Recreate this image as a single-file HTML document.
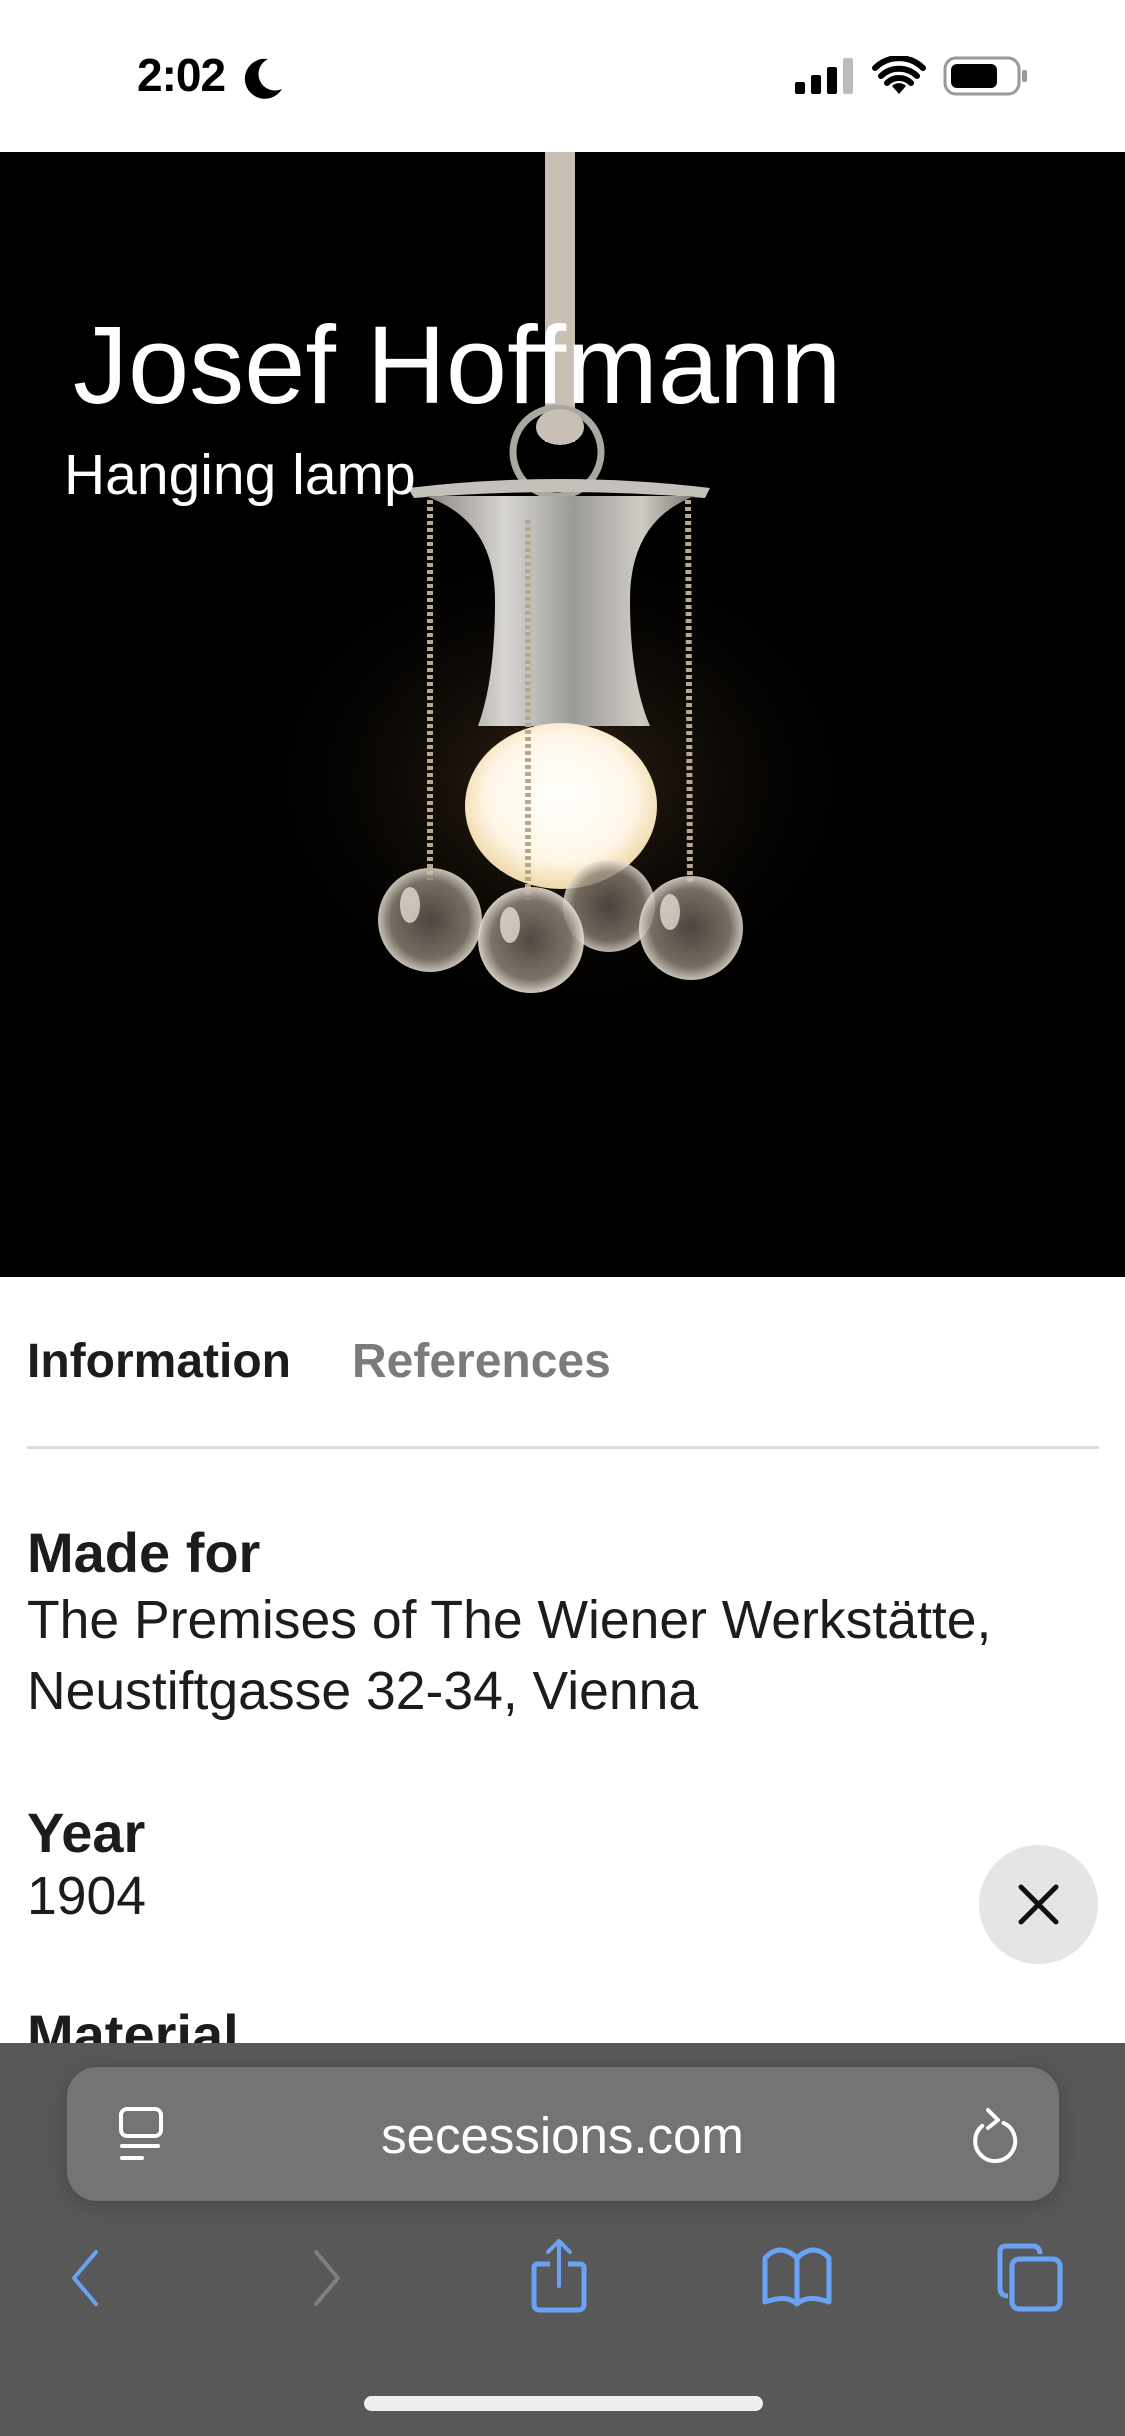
<!DOCTYPE html>
<html><head><meta charset="utf-8"><style>
*{margin:0;padding:0;box-sizing:border-box}
html,body{width:1125px;height:2436px;overflow:hidden;background:#fff;font-family:"Liberation Sans",sans-serif}
.abs{position:absolute}
</style></head><body>
<div class="abs" style="left:0;top:0;width:1125px;height:152px;background:#fff"></div>
<div class="abs" style="left:137px;top:48px;font-size:46px;font-weight:bold;color:#000;letter-spacing:-1px">2:02</div>
<svg class="abs" style="left:242px;top:57px" width="44" height="44" viewBox="0 0 44 44"><path d="M26 2 A20 20 0 1 0 40 32 A16 16 0 0 1 26 2Z" fill="#000"/></svg>
<svg class="abs" style="left:795px;top:58px" width="60" height="36"><rect x="0" y="24" width="10" height="12" rx="2" fill="#000"/><rect x="16" y="17" width="10" height="19" rx="2" fill="#000"/><rect x="32" y="9" width="10" height="27" rx="2" fill="#000"/><rect x="48" y="0" width="10" height="36" rx="2" fill="#bbb"/></svg>
<svg class="abs" style="left:872px;top:56px" width="54" height="40" viewBox="0 0 54 40"><path d="M27 38 L20 30 A10 10 0 0 1 34 30Z" fill="#000"/><path d="M9 20 A26 26 0 0 1 45 20" stroke="#000" stroke-width="6" fill="none" stroke-linecap="round"/><path d="M15 27 A17 17 0 0 1 39 27" stroke="#000" stroke-width="6" fill="none" stroke-linecap="round"/><path d="M3 12 A34 34 0 0 1 51 12" stroke="#000" stroke-width="6" fill="none" stroke-linecap="round"/></svg>
<svg class="abs" style="left:943px;top:56px" width="86" height="40"><rect x="2" y="2" width="74" height="36" rx="11" fill="none" stroke="#999" stroke-width="3"/><rect x="8" y="8" width="46" height="24" rx="6" fill="#000"/><rect x="79" y="14" width="5" height="12" rx="2" fill="#999"/></svg>

<div class="abs" style="left:0;top:152px;width:1125px;height:1125px;background:#000;overflow:hidden">
<svg width="1125" height="1125" viewBox="0 152 1125 1125" style="position:absolute;left:0;top:0">
<defs>
<radialGradient id="glow" cx="0.5" cy="0.5" r="0.5"><stop offset="0" stop-color="#3a2a18" stop-opacity="0.9"/><stop offset="1" stop-color="#000" stop-opacity="0"/></radialGradient>
<radialGradient id="bulb" cx="0.5" cy="0.45" r="0.55"><stop offset="0" stop-color="#fff"/><stop offset="0.7" stop-color="#fff6e6"/><stop offset="1" stop-color="#f0d8a8"/></radialGradient>
<linearGradient id="shade" x1="0" x2="1"><stop offset="0" stop-color="#8a8680"/><stop offset="0.3" stop-color="#d8d6d2"/><stop offset="0.55" stop-color="#9c9a96"/><stop offset="0.8" stop-color="#cfccc6"/><stop offset="1" stop-color="#7a7670"/></linearGradient>
<radialGradient id="ball" cx="0.5" cy="0.5" r="0.5"><stop offset="0" stop-color="#5a5048"/><stop offset="0.75" stop-color="#8a8074"/><stop offset="1" stop-color="#e8e0d4"/></radialGradient>
</defs>
<ellipse cx="560" cy="780" rx="330" ry="260" fill="url(#glow)"/>
<rect x="545" y="152" width="30" height="290" fill="#c8c0b2"/>
<circle cx="557" cy="452" r="44" fill="none" stroke="#aaa6a0" stroke-width="7"/>
<ellipse cx="560" cy="427" rx="24" ry="18" fill="#c8c0b4"/>
<path d="M408 488 Q560 470 710 488 L705 498 Q560 486 414 498Z" fill="#c4c0ba"/>
<path d="M425 496 Q495 520 495 600 Q495 680 478 726 L650 726 Q630 680 630 600 Q630 520 695 496Z" fill="url(#shade)"/>
<ellipse cx="561" cy="806" rx="96" ry="83" fill="url(#bulb)"/>
<g stroke="#b8a88e" stroke-width="6" fill="none" stroke-dasharray="4 3">
<path d="M430 500 L430 880"/><path d="M528 520 L528 900"/><path d="M688 500 L690 885"/>
</g>
<circle cx="430" cy="920" r="52" fill="url(#ball)" opacity="0.85"/>
<circle cx="609" cy="906" r="46" fill="url(#ball)" opacity="0.8"/>
<circle cx="691" cy="928" r="52" fill="url(#ball)" opacity="0.85"/>
<circle cx="531" cy="940" r="53" fill="url(#ball)" opacity="0.9"/>
<g fill="#f4eee4" opacity="0.7"><ellipse cx="410" cy="905" rx="10" ry="18"/><ellipse cx="510" cy="925" rx="10" ry="18"/><ellipse cx="670" cy="912" rx="10" ry="18"/></g>
</svg>
<div class="abs" style="left:73px;top:150px;font-size:110px;color:#fff;white-space:nowrap">Josef Hoffmann</div>
<div class="abs" style="left:64px;top:290px;font-size:57px;color:#fff;white-space:nowrap">Hanging lamp</div>
</div>

<div class="abs" style="left:27px;top:1334px;font-size:48px;font-weight:bold;color:#1c1c1e">Information</div>
<div class="abs" style="left:352px;top:1334px;font-size:48px;font-weight:bold;color:#7b7b7b">References</div>
<div class="abs" style="left:27px;top:1446px;width:1072px;height:3px;background:#dcdcdc"></div>

<div class="abs" style="left:27px;top:1520px;font-size:56px;font-weight:bold;color:#1c1c1e">Made for</div>
<div class="abs" style="left:27px;top:1585px;font-size:53.5px;color:#1c1c1e;line-height:71px;white-space:nowrap">The Premises of The Wiener Werkstätte,<br>Neustiftgasse 32-34, Vienna</div>
<div class="abs" style="left:27px;top:1800px;font-size:56px;font-weight:bold;color:#1c1c1e">Year</div>
<div class="abs" style="left:27px;top:1866px;font-size:53.5px;color:#1c1c1e">1904</div>
<div class="abs" style="left:27px;top:2002px;font-size:56px;font-weight:bold;color:#1c1c1e">Material</div>

<div class="abs" style="left:979px;top:1845px;width:119px;height:119px;border-radius:50%;background:#e5e5e7"></div>
<svg class="abs" style="left:1018px;top:1884px" width="41" height="41"><path d="M3 3 L38 38 M38 3 L3 38" stroke="#111" stroke-width="5" stroke-linecap="round"/></svg>

<div class="abs" style="left:0;top:2043px;width:1125px;height:393px;background:#585858"></div>
<div class="abs" style="left:67px;top:2067px;width:992px;height:134px;border-radius:30px;background:#747474;box-shadow:0 4px 20px rgba(0,0,0,0.2)"></div>
<svg class="abs" style="left:118px;top:2106px" width="48" height="58"><rect x="3" y="3" width="40" height="27" rx="6" fill="none" stroke="#fff" stroke-width="4"/><rect x="2" y="38" width="40" height="4" rx="2" fill="#fff"/><rect x="2" y="50" width="24" height="4" rx="2" fill="#fff"/></svg>
<div class="abs" style="left:0;top:2106px;width:1125px;text-align:center;font-size:51px;color:#fff">secessions.com</div>
<svg class="abs" style="left:964px;top:2104px" width="56" height="64" viewBox="0 0 56 64"><path d="M33 16 A20 20 0 1 1 14 26" stroke="#fff" stroke-width="4" fill="none" stroke-linecap="round" transform="rotate(20 28 36)"/><path d="M24 6 L34 16 L24 24" stroke="#fff" stroke-width="4" fill="none" stroke-linecap="round" stroke-linejoin="round"/></svg>

<svg class="abs" style="left:66px;top:2248px" width="36" height="60"><path d="M30 4 L8 30 L30 56" stroke="#6aa3f5" stroke-width="4" fill="none" stroke-linecap="round" stroke-linejoin="round"/></svg>
<svg class="abs" style="left:310px;top:2248px" width="36" height="60"><path d="M6 4 L28 30 L6 56" stroke="#7f7f7f" stroke-width="4" fill="none" stroke-linecap="round" stroke-linejoin="round"/></svg>
<svg class="abs" style="left:528px;top:2238px" width="64" height="76"><path d="M22 26 L10 26 Q6 26 6 30 L6 66 Q6 72 12 72 L50 72 Q56 72 56 66 L56 30 Q56 26 52 26 L40 26" stroke="#6aa3f5" stroke-width="5" fill="none"/><path d="M31 48 L31 4 M20 14 L31 3 L42 14" stroke="#6aa3f5" stroke-width="4" fill="none" stroke-linecap="round" stroke-linejoin="round"/></svg>
<svg class="abs" style="left:760px;top:2244px" width="74" height="66"><path d="M37 60 Q27 50 5 58 L5 14 Q20 -2 37 14 Q54 -2 69 14 L69 58 Q47 50 37 60Z M37 14 L37 60" stroke="#6aa3f5" stroke-width="5" fill="none" stroke-linejoin="round"/></svg>
<svg class="abs" style="left:996px;top:2242px" width="70" height="72"><path d="M12 54 Q4 54 4 46 L4 10 Q4 4 10 4 L36 4 Q44 4 44 12" stroke="#6aa3f5" stroke-width="5" fill="none"/><rect x="16" y="17" width="48" height="50" rx="7" fill="none" stroke="#6aa3f5" stroke-width="5"/></svg>

<div class="abs" style="left:364px;top:2396px;width:399px;height:15px;border-radius:8px;background:#efefef"></div>
</body></html>
